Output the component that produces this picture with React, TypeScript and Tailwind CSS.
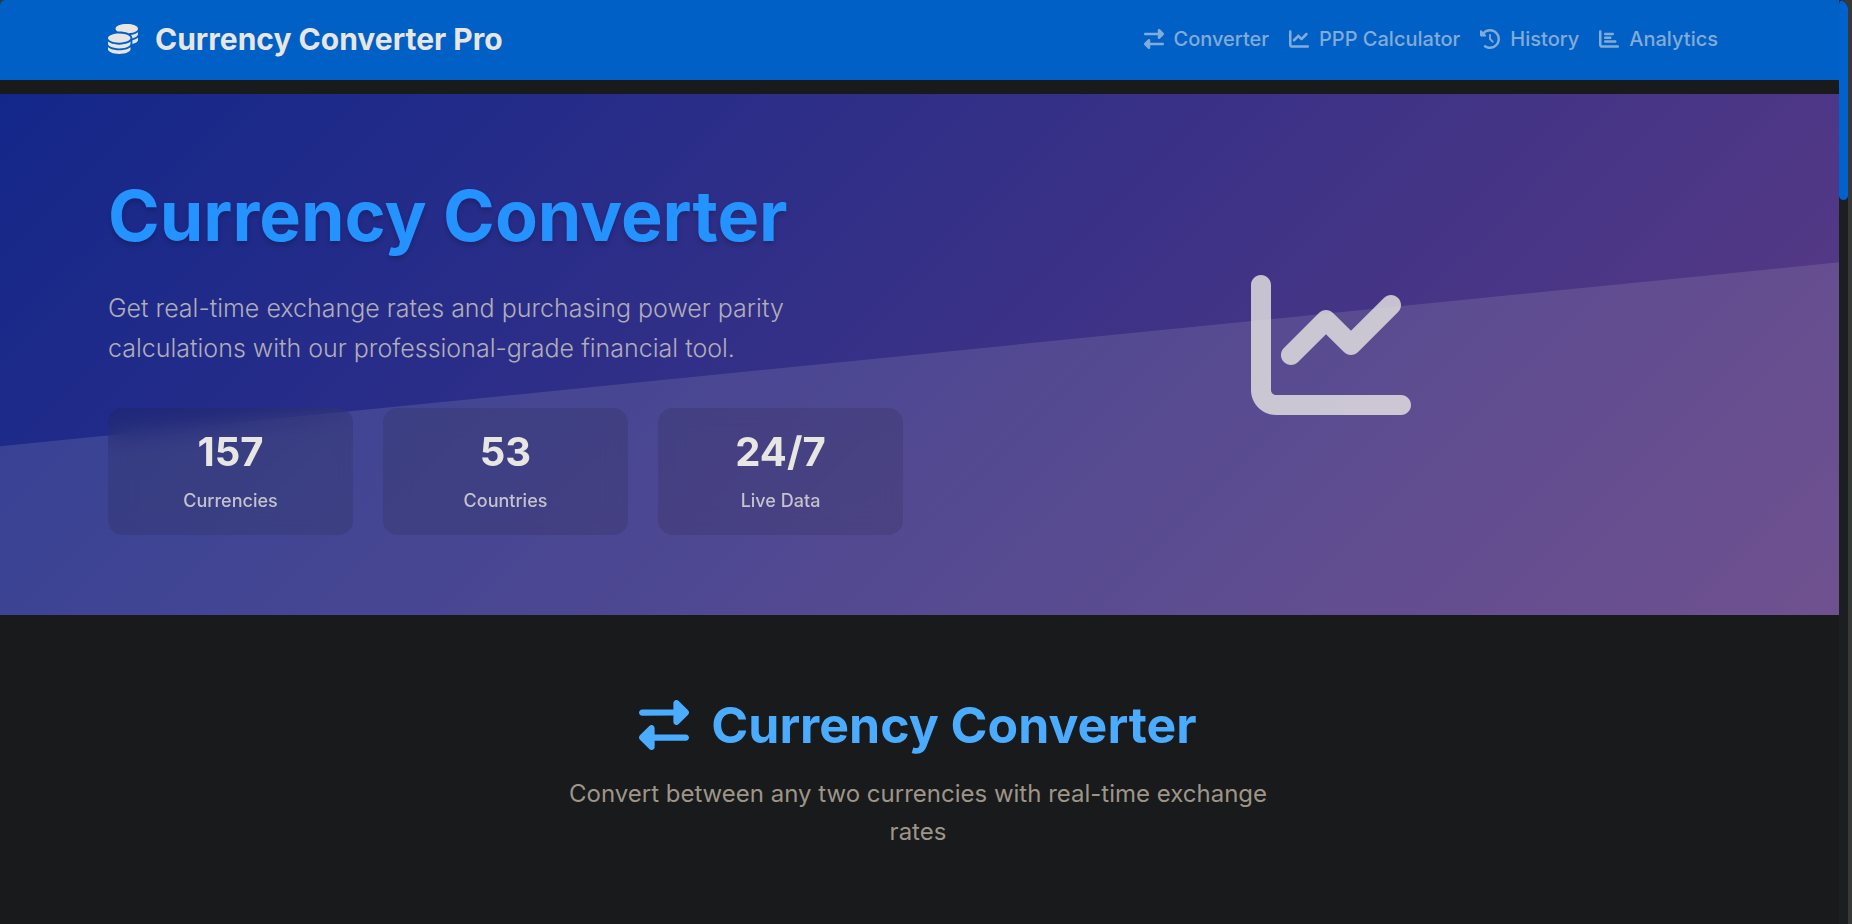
import React from "react";
import { FaCoins, FaRightLeft, FaChartLine, FaClockRotateLeft, FaChartBar } from "react-icons/fa6";

const links = [
  { label: "Converter", href: "#converter", icon: FaRightLeft },
  { label: "PPP Calculator", href: "#ppp", icon: FaChartLine },
  { label: "History", href: "#history", icon: FaClockRotateLeft },
  { label: "Analytics", href: "#analytics", icon: FaChartBar },
];

const stats = [
  { value: "157", label: "Currencies" },
  { value: "53", label: "Countries" },
  { value: "24/7", label: "Live Data" },
];

function Container({ className = "", children }: { className?: string; children: React.ReactNode }) {
  return (
    <div className="pr-[3px]">
      <div className={`mx-auto w-full max-w-[1650px] px-[15px] ${className}`}>{children}</div>
    </div>
  );
}

function Navbar() {
  return (
    <header className="bg-[#0060c5]">
      <Container className="flex h-20 items-center justify-between pb-0.5">
        <a href="#top" className="flex items-center gap-[17px] text-3xl font-bold text-[#e8e6e3]">
          <FaCoins aria-hidden="true" />
          Currency Converter Pro
        </a>
        <nav aria-label="Main" className="flex items-center gap-5 pr-2.5">
          {links.map(({ label, href, icon: Icon }) => (
            <a key={label} href={href} className="flex items-center gap-2.5 text-xl font-medium text-[#82abd7]">
              <Icon aria-hidden="true" />
              {label}
            </a>
          ))}
        </nav>
      </Container>
    </header>
  );
}

function Hero() {
  return (
    <section id="top" className="relative mt-3.5 bg-[linear-gradient(135deg,#13278a_0%,#5e3b84_100%)] py-20">
      <div className="absolute inset-0 bg-[#e8e6e3]/13 [clip-path:polygon(0_67.6%,100%_32.3%,100%_100%,0_100%)]" />
      <div className="relative">
        <Container className="grid grid-cols-2 items-center gap-[30px]">
          <div>
            <h1 className="mb-[30px] text-[70px] leading-[84px] font-bold text-[#2492ff] [text-shadow:0_3px_5px_rgba(0,0,0,0.2)]">
              Currency Converter
            </h1>
            <p className="mb-10 max-w-[750px] text-[25px] leading-10 font-light text-[#b0adb8]">
              Get real-time exchange rates and purchasing power parity calculations with our professional-grade financial tool.
            </p>
            <dl className="grid grid-cols-3 gap-[30px]">
              {stats.map((s) => (
                <div
                  key={s.label}
                  className="flex flex-col-reverse gap-2.5 rounded-[15px] bg-[#181a1b]/13 p-5 text-center backdrop-blur-[12px]"
                >
                  <dt className="text-lg leading-[29px] font-medium text-[#c4c2cc]">{s.label}</dt>
                  <dd className="text-[40px] leading-[48px] font-bold text-[#e8e6e3]">{s.value}</dd>
                </div>
              ))}
            </dl>
          </div>
          <div className="mb-5 flex justify-center">
            <FaChartLine aria-hidden="true" className="size-40 text-[#e8e6e3] opacity-80" />
          </div>
        </Container>
      </div>
    </section>
  );
}

function ConverterIntro() {
  return (
    <section id="converter" className="py-20">
      <Container className="text-center">
        <h2 className="mb-5 flex items-center justify-center gap-[22px] text-[50px] leading-[60px] font-bold text-[#4aabff]">
          <FaRightLeft aria-hidden="true" />
          Currency Converter
        </h2>
        <p className="mx-auto max-w-[750px] text-2xl leading-[38px] text-[#9e9589]">
          Convert between any two currencies with real-time exchange rates
        </p>
      </Container>
    </section>
  );
}

export default function App() {
  return (
    <div className="min-h-screen bg-[#383838] pr-1 font-['Inter',sans-serif]">
      <div className="flex min-h-screen overflow-hidden rounded-l-[5px] rounded-r-[9px] bg-[#181a1b]">
        <main className="min-w-0 flex-1">
          <Navbar />
          <Hero />
          <ConverterIntro />
        </main>
        <div aria-hidden="true" className="w-[9px] bg-[#1c1f20]">
          <div className="h-[200px] rounded-full bg-[#0062cc]" />
        </div>
      </div>
    </div>
  );
}
